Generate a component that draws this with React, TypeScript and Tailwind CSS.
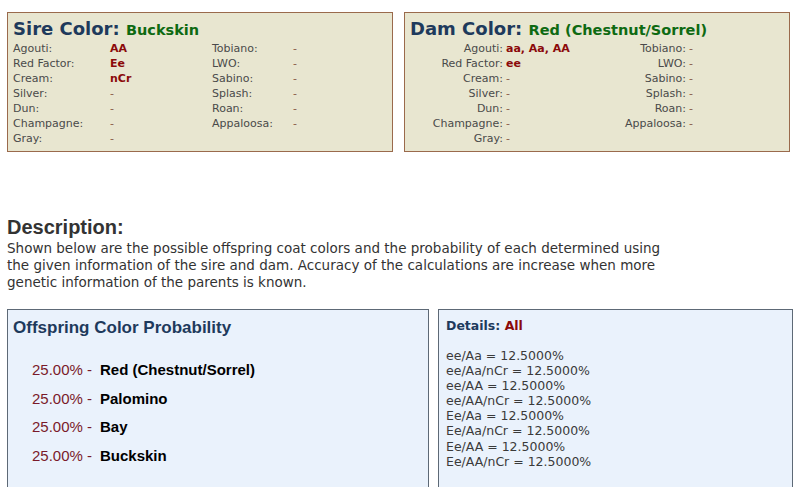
import React from "react";

const sireRows: [string, string, string, string][] = [
  ["Agouti:", "AA", "Tobiano:", "-"],
  ["Red Factor:", "Ee", "LWO:", "-"],
  ["Cream:", "nCr", "Sabino:", "-"],
  ["Silver:", "-", "Splash:", "-"],
  ["Dun:", "-", "Roan:", "-"],
  ["Champagne:", "-", "Appaloosa:", "-"],
  ["Gray:", "-", "", ""],
];

const damRows: [string, string, string, string][] = [
  ["Agouti:", "aa, Aa, AA", "Tobiano:", "-"],
  ["Red Factor:", "ee", "LWO:", "-"],
  ["Cream:", "-", "Sabino:", "-"],
  ["Silver:", "-", "Splash:", "-"],
  ["Dun:", "-", "Roan:", "-"],
  ["Champagne:", "-", "Appaloosa:", "-"],
  ["Gray:", "-", "", ""],
];

const Val = ({ v }: { v: string }) =>
  v === "-" ? (
    <span className="text-[#8a5a4a]">-</span>
  ) : (
    <span className="font-bold text-[#8b0a0a]">{v}</span>
  );

const details = [
  "ee/Aa = 12.5000%",
  "ee/Aa/nCr = 12.5000%",
  "ee/AA = 12.5000%",
  "ee/AA/nCr = 12.5000%",
  "Ee/Aa = 12.5000%",
  "Ee/Aa/nCr = 12.5000%",
  "Ee/AA = 12.5000%",
  "Ee/AA/nCr = 12.5000%",
];

const offspring = ["Red (Chestnut/Sorrel)", "Palomino", "Bay", "Buckskin"];

export default function App() {
  return (
    <div className="w-[800px] h-[487px] overflow-hidden bg-white px-[7px] pt-[12px]" style={{ fontFamily: '"DejaVu Sans", Verdana, sans-serif' }}>
      <div className="flex gap-[11px]">
        {/* Sire */}
        <div className="w-[386px] h-[140px] border border-[#9a6a4c] bg-[#e8e6d0] px-[5px] pt-[3px]">
          <div className="h-[25px] leading-[25px] whitespace-nowrap">
            <span className="text-[18px] font-bold text-[#1e3a5c]">Sire Color: </span>
            <span className="text-[14.5px] font-bold text-[#0e6a12]">Buckskin</span>
          </div>
          <div className="grid grid-cols-[97px_102px_81px_1fr] text-[11px] leading-[15px] text-[#4a4a4a]">
            {sireRows.map((r, i) => (
              <React.Fragment key={i}>
                <div>{r[0]}</div>
                <div><Val v={r[1]} /></div>
                <div>{r[2]}</div>
                <div>{r[3] && <Val v={r[3]} />}</div>
              </React.Fragment>
            ))}
          </div>
        </div>
        {/* Dam */}
        <div className="w-[386px] h-[140px] border border-[#9a6a4c] bg-[#e8e6d0] px-[5px] pt-[3px]">
          <div className="h-[25px] leading-[25px] whitespace-nowrap">
            <span className="text-[18px] font-bold text-[#1e3a5c]">Dam Color: </span>
            <span className="text-[14.5px] font-bold text-[#0e6a12]">Red (Chestnut/Sorrel)</span>
          </div>
          <div className="grid grid-cols-[93px_88px_95px_1fr] text-[11px] leading-[15px] text-[#4a4a4a]">
            {damRows.map((r, i) => (
              <React.Fragment key={i}>
                <div className="text-right">{r[0]}</div>
                <div className="pl-[3px]"><Val v={r[1]} /></div>
                <div className="text-right">{r[2]}</div>
                <div className="pl-[3px]">{r[3] && <Val v={r[3]} />}</div>
              </React.Fragment>
            ))}
          </div>
        </div>
      </div>

      <div className="mt-[63px]">
        <h2 className="text-[20px] font-bold leading-[24px] text-[#333]" style={{ fontFamily: '"Liberation Sans", Arial, sans-serif' }}>
          Description:
        </h2>
        <p className="mt-[1px] w-[675px] text-[13.5px] leading-[17px] text-[#333]" style={{ fontFamily: '"DejaVu Sans", Verdana, sans-serif' }}>
          Shown below are the possible offspring coat colors and the probability of each determined using the given information of the sire and dam. Accuracy of the calculations are increase when more genetic information of the parents is known.
        </p>
      </div>

      <div className="mt-[18px] flex gap-[9px]">
        <div className="w-[422px] h-[200px] border border-[#5d6976] bg-[#eaf2fc] px-[5px] pt-[7px]" style={{ fontFamily: '"Liberation Sans", Arial, sans-serif' }}>
          <div className="text-[17px] font-bold leading-[22px] text-[#1e3a5c]">Offspring Color Probability</div>
          <div className="mt-[17px] pl-[19px] flex flex-col">
            {offspring.map((o) => (
              <div key={o} className="h-[28.7px] flex items-center text-[15px] whitespace-nowrap">
                <span className="w-[68px] text-[#7a1a2a]">25.00% -</span>
                <span className="font-bold text-black">{o}</span>
              </div>
            ))}
          </div>
        </div>
        <div className="w-[355px] h-[200px] border border-[#5d6976] bg-[#eaf2fc] px-[7px] pt-[7px]">
          <div className="text-[12.5px] font-bold leading-[17px] text-[#1e3a5c]">
            Details: <span className="text-[#8b0a0a]">All</span>
          </div>
          <div className="mt-[14px] text-[12.5px] leading-[15.1px] text-[#3a3a3a]">
            {details.map((d) => (
              <div key={d}>{d}</div>
            ))}
          </div>
        </div>
      </div>
    </div>
  );
}
